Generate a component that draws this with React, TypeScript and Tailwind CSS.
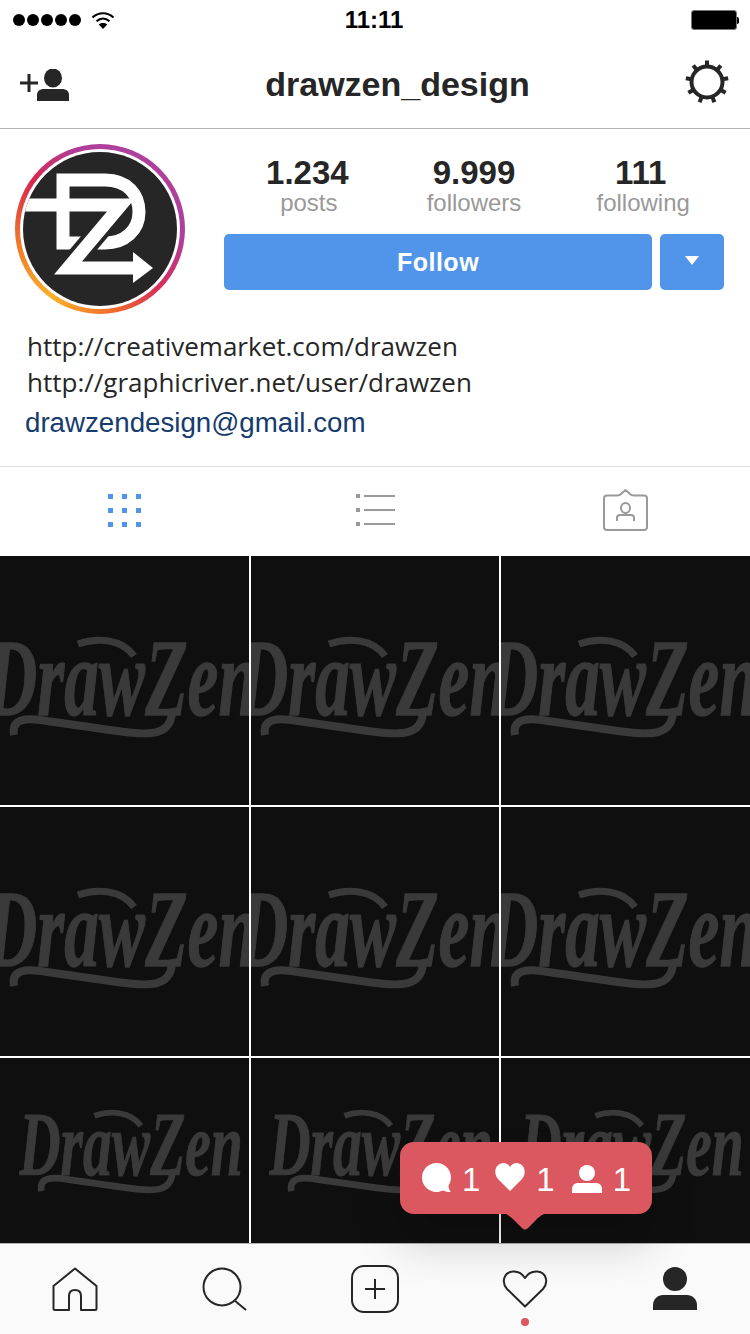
const tabIcon = "#999999";

function StatusBar() {
  return (
    <div className="h-10 flex items-center justify-between pl-[13px] pr-[11px] relative">
      <div className="flex items-center gap-[2px]">
        {[0, 1, 2, 3, 4].map((i) => (
          <span key={i} className="w-3 h-3 rounded-full bg-black" />
        ))}
        <svg width="24" height="18" viewBox="0 0 24 18" className="ml-[8px]">
          <path d="M1.5 6.5C7.5 .8 16.5 .8 22.5 6.5" fill="none" stroke="#000" strokeWidth="2.2" />
          <path d="M5.5 10.2C9.5 6.6 14.5 6.6 18.5 10.2" fill="none" stroke="#000" strokeWidth="2.2" />
          <path d="M12 18L7.8 13.4C10.2 11.6 13.8 11.6 16.2 13.4Z" fill="#000" />
        </svg>
      </div>
      <span className="absolute left-0 right-0 text-center font-bold text-[24px] leading-10 pointer-events-none -ml-[2px]">11:11</span>
      <div className="flex items-center">
        <div className="w-[46px] h-[20px] rounded-[3px] border border-[#777777] bg-black" />
        <div className="w-[2px] h-[7px] bg-black rounded-r-sm" />
      </div>
    </div>
  );
}

function Header() {
  return (
    <div className="h-[89px] flex items-center pl-5 pr-5 border-b border-[#b2b2b2]">
      <svg width="50" height="34" viewBox="0 0 50 34" className="shrink-0 mt-[3px]">
        <path d="M9 5V23M0 14H18" stroke="#262626" strokeWidth="3" />
        <ellipse cx="33" cy="9" rx="9" ry="9.5" fill="#262626" />
        <path d="M17 32V26C17 22 20 20 24 20H42C46 20 49 22 49 26V32Z" fill="#262626" />
      </svg>
      <div className="flex-1 pl-[41px] text-center font-bold text-[34px] leading-none text-[#262626]">drawzen_design</div>
      <svg width="46" height="46" viewBox="0 0 46 46" className="shrink-0 -mt-1">
        <circle cx="23" cy="23" r="15.5" fill="none" stroke="#262626" strokeWidth="4" />
        {[0, 40, 80, 120, 160, 200, 240, 280, 320].map((a) => (
          <rect key={a} x="21" y="1.5" width="4" height="6" fill="#262626" transform={`rotate(${a} 23 23)`} />
        ))}
      </svg>
    </div>
  );
}

function Avatar() {
  return (
    <div className="w-[170px] h-[170px] rounded-full shrink-0 p-[5px] bg-[conic-gradient(#ae3f9c_0deg,#ae3f9c_95deg,#d92c5a_135deg,#ef6b2b_170deg,#fbb02a_215deg,#ef7a2a_260deg,#d9264f_305deg,#ae3f9c_345deg)]">
      <div className="w-full h-full rounded-full bg-white p-[3px]">
        <div className="w-full h-full rounded-full bg-[#262626] overflow-hidden">
          <svg viewBox="23 152 154 154" className="w-full h-full block">
            <path d="M63 243V180H105C128 180 139 195 139 212C139 230 125 243 105 243Z" fill="none" stroke="#fff" strokeWidth="13" />
            <path d="M121 205L68 268" fill="none" stroke="#262626" strokeWidth="21" />
            <path d="M20 205H121L68 268H135" fill="none" stroke="#fff" strokeWidth="13" />
            <path d="M133 252L153 268L133 283Z" fill="#fff" />
          </svg>
        </div>
      </div>
    </div>
  );
}

function Stat({ value, label, labelClass }: { value: string; label: string; labelClass?: string }) {
  return (
    <div className="text-center">
      <div className="font-bold text-[33px] leading-[36px] pt-[1px] text-[#262626]">{value}</div>
      <div className={`text-[24px] leading-[23px] text-[#999999] ${labelClass ?? ""}`}>{label}</div>
    </div>
  );
}

function Profile() {
  return (
    <div className="h-[338px] border-b border-[#dbdbdb]">
      <div className="flex pt-[15px] pl-[15px]">
        <Avatar />
        <div className="ml-[39px] w-[500px] pt-[10px]">
          <div className="grid grid-cols-3">
            <Stat value="1.234" label="posts" labelClass="pl-[3px]" />
            <Stat value="9.999" label="followers" />
            <Stat value="111" label="following" labelClass="pl-[5px]" />
          </div>
          <div className="flex gap-2 mt-5 h-14">
            <button className="flex-1 rounded-[5px] bg-[#5195ea] text-white font-bold text-[25px] tracking-[0.5px] pt-[2px]">Follow</button>
            <button className="w-16 rounded-[5px] bg-[#5195ea] flex items-center justify-center pb-1">
              <span className="w-0 h-0 border-x-[7px] border-x-transparent border-t-[9px] border-t-white" />
            </button>
          </div>
        </div>
      </div>
      <div className="pl-[27px] mt-[14px] text-[26px] leading-9 text-[#262626] font-['Open_Sans',sans-serif]">
        <div>http://creativemarket.com/drawzen</div>
        <div>http://graphicriver.net/user/drawzen</div>
        <div className="mt-[5px] -ml-[2px] text-[#163b6e] text-[27.7px] font-['Liberation_Sans',Arial,sans-serif]">drawzendesign@gmail.com</div>
      </div>
    </div>
  );
}

function Tabs() {
  return (
    <div className="h-[89px] grid grid-cols-3 items-center justify-items-center">
      <svg width="33" height="33" viewBox="0 0 33 33" className="mr-[1px] mb-[3px]">
        {[0, 14, 28].map((y) =>
          [0, 14, 28].map((x) => <rect key={`${x}-${y}`} x={x} y={y} width="5" height="5" fill="#5195ea" />),
        )}
      </svg>
      <svg width="39" height="33" viewBox="0 0 39 33" className="mb-[3px]">
        {[0, 14, 28].map((y) => (
          <g key={y}>
            <rect x="0" y={y} width="4" height="4" fill={tabIcon} />
            <rect x="8" y={y + 1} width="31" height="2" fill={tabIcon} />
          </g>
        ))}
      </svg>
      <svg width="45" height="42" viewBox="0 0 45 42" fill="none" stroke={tabIcon} strokeWidth="2" className="mb-[3px] ml-[1px]">
        <path d="M4 6.5H14C16 6.5 17 6 18 5L22.5 1L27 5C28 6 29 6.5 31 6.5H41C43 6.5 44 7.5 44 9.5V38C44 40 43 41 41 41H4C2 41 1 40 1 38V9.5C1 7.5 2 6.5 4 6.5Z" />
        <ellipse cx="22.5" cy="19" rx="4.5" ry="5" />
        <path d="M14 32V29C14 27 15 26 17 26H28C30 26 31 27 31 29V32" />
      </svg>
    </div>
  );
}

function TileLogo({ small }: { small?: boolean }) {
  return (
    <svg viewBox="0 0 275 120" className={small ? "w-[228px] shrink-0 ml-[16px] mb-[55px]" : "w-[275px] shrink-0 mt-5"}>
      <text
        x="0"
        y="0"
        textLength="270"
        lengthAdjust="spacingAndGlyphs"
        transform="translate(0 84) scale(1 1.3)"
        stroke="#3a3a3a"
        strokeWidth="1"
        className="font-['Liberation_Serif',serif] italic font-bold text-[84px] fill-[#3a3a3a]"
      >
        DrawZen
      </text>
      <path d="M91 13C110 6 135 8 147 25" fill="none" stroke="#3a3a3a" strokeWidth="7" />
      <path d="M27 104C24 88 38 86 60 90L130 100C165 105 183 104 185 82" fill="none" stroke="#3a3a3a" strokeWidth="8" />
    </svg>
  );
}

function Tile({ small }: { small?: boolean }) {
  return (
    <div className="h-[249px] bg-[#0f0f0f] overflow-hidden flex items-center justify-center">
      <TileLogo small={small} />
    </div>
  );
}

function Grid() {
  return (
    <div className="flex-1 min-h-0 overflow-hidden">
      <div className="grid grid-cols-[249px_248px_249px] gap-[2px]">
        {[0, 1, 2, 3, 4, 5].map((i) => (
          <Tile key={i} />
        ))}
        {[6, 7, 8].map((i) => (
          <Tile key={i} small />
        ))}
      </div>
    </div>
  );
}

function BottomNav() {
  return (
    <div className="h-[91px] bg-[#fafafa] border-t border-[#b2b2b2] grid grid-cols-5 items-center justify-items-center">
      <svg width="46" height="44" viewBox="0 0 46 44" fill="none" stroke="#262626" strokeWidth="2" strokeLinejoin="round">
        <path d="M1.5 19L23 1.5L44.5 19V41.5C44.5 42.5 44 43 43 43H29V29C29 25 27 23 23 23S17 25 17 29V43H3C2 43 1.5 42.5 1.5 41.5Z" />
      </svg>
      <svg width="46" height="44" viewBox="0 0 46 44" fill="none" stroke="#262626" strokeWidth="2">
        <circle cx="20" cy="20" r="18.5" />
        <path d="M32 33L44 43" />
      </svg>
      <svg width="48" height="48" viewBox="0 0 48 48" fill="none" stroke="#262626" strokeWidth="2">
        <rect x="1" y="1" width="46" height="46" rx="12" />
        <path d="M24 14V34M14 24H34" />
      </svg>
      <svg width="46" height="38" viewBox="0 0 46 38" fill="none" stroke="#262626" strokeWidth="2" strokeLinejoin="round">
        <path d="M23 36.5L5 19C-1 12 2 2 11 1.5C16 1.2 20.5 4 23 8C25.5 4 30 1.2 35 1.5C44 2 47 12 41 19Z" />
      </svg>
      <svg width="46" height="44" viewBox="0 0 46 44" fill="#262626">
        <circle cx="23" cy="12" r="12" />
        <path d="M1 43V38C1 32 6 28 11 28H35C40 28 45 32 45 38V43Z" />
      </svg>
    </div>
  );
}

function ActivityPopup() {
  return (
    <>
      <div className="absolute left-[400px] top-[1142px] w-[252px] h-[72px] rounded-[14px] bg-[#dc5860] shadow-[0_30px_45px_rgba(0,0,0,0.18)] flex items-center pl-[22px] text-white text-[33px] leading-none">
        <svg width="30" height="30" viewBox="0 0 30 30" fill="#fff" className="mr-[10px]">
          <path d="M14.5 0C22.5 0 29 6.3 29 14.3C29 17.5 28 20.5 26.5 22.5C26.5 25 27.5 27.5 29 29C26 29.3 23 28.5 21 27.5C19 28.4 16.8 29 14.5 29C6.5 29 0 22.5 0 14.5S6.5 0 14.5 0Z" />
        </svg>
        <span className="mt-[2px]">1</span>
        <svg width="30" height="28" viewBox="0 0 30 28" fill="#fff" className="ml-[15px] mr-[11px] mb-[3px]">
          <path d="M15 28L3 16C-2 10 0 1 8 0C11 0 13.5 1.5 15 4C16.5 1.5 19 0 22 0C30 1 32 10 27 16Z" />
        </svg>
        <span className="mt-[2px]">1</span>
        <svg width="30" height="28" viewBox="0 0 30 28" fill="#fff" className="ml-[17px] mr-[11px] mt-[1px]">
          <circle cx="15" cy="8" r="8" />
          <path d="M0 28V24C0 20 3 18 6 18H24C27 18 30 20 30 24V28Z" />
        </svg>
        <span className="mt-[2px]">1</span>
      </div>
      <svg width="44" height="17" viewBox="0 0 44 17" className="absolute left-[503px] top-[1213px]">
        <path d="M0 0H44C38 2 36 4 32 8L25 15C23 17 21 17 19 15L12 8C8 4 6 2 0 0Z" fill="#dc5860" />
      </svg>
      <span className="absolute left-[521px] top-[1318px] w-2 h-2 rounded-full bg-[#dc5860]" />
    </>
  );
}

export default function App() {
  return (
    <div className="relative w-[750px] h-[1334px] overflow-hidden flex flex-col bg-white text-black font-['Liberation_Sans',Arial,sans-serif]">
      <StatusBar />
      <Header />
      <Profile />
      <Tabs />
      <Grid />
      <BottomNav />
      <ActivityPopup />
    </div>
  );
}
